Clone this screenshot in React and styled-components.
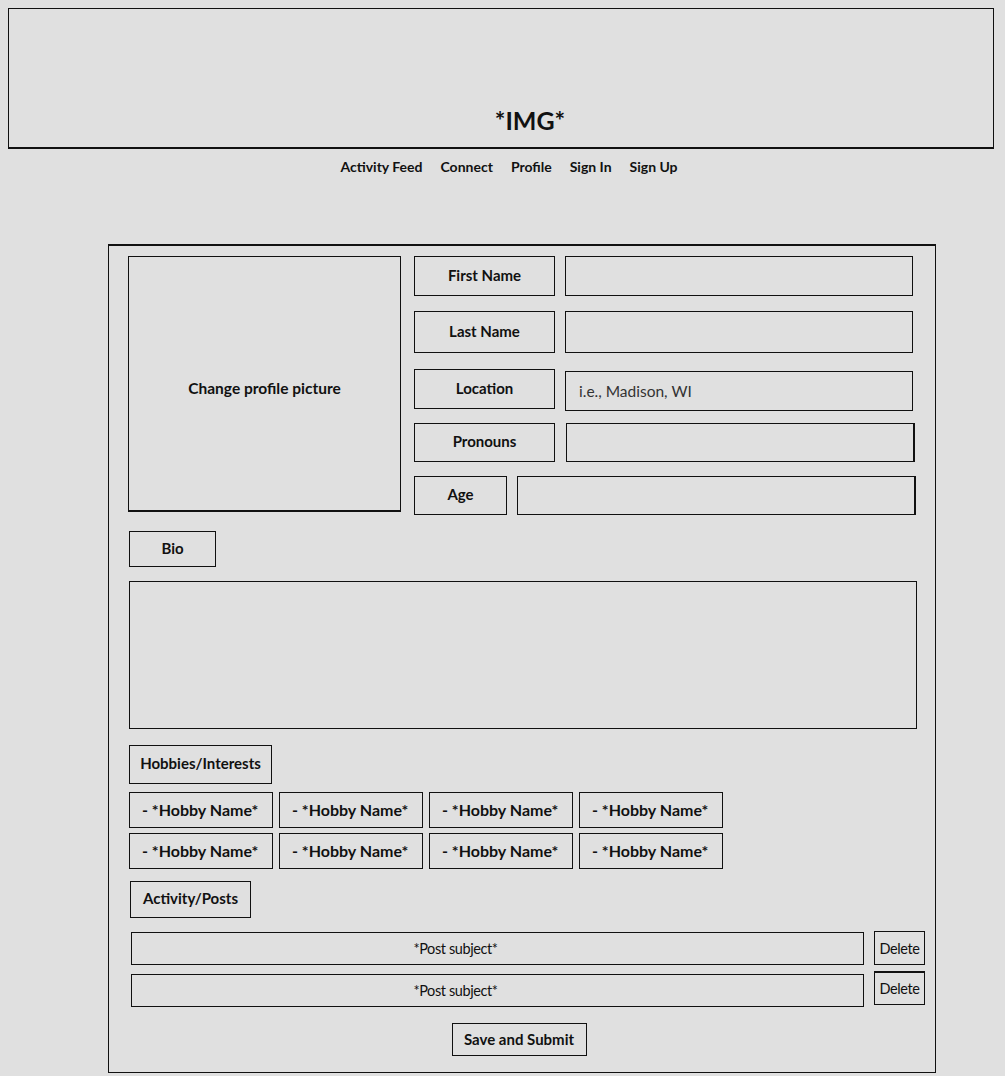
import React from 'react';
import styled, { createGlobalStyle } from 'styled-components';

const GlobalStyle = createGlobalStyle`
  html, body {
    background: #e0e0e0;
  }
  body {
    margin: 8px;
    font-family: Lato, "Open Sans", "Liberation Sans", sans-serif;
    color: #111;
  }
`;

const Banner = styled.header`
  width: 986px;
  height: 141px;
  border: 1px solid #111;
  border-bottom-width: 2px;
  display: flex;
  align-items: flex-end;
  justify-content: center;
  padding-left: 58px;
  padding-bottom: 12px;
  box-sizing: border-box;
  font-size: 25px;
  font-weight: 700;
`;

const Nav = styled.nav`
  display: flex;
  justify-content: center;
  gap: 18px;
  width: 986px;
  padding: 9px 0 0 16px;
  height: 95px;
  box-sizing: border-box;
  font-size: 14px;
  font-weight: 700;
`;

const NavLink = styled.span`
  cursor: pointer;
`;

const Card = styled.main`
  width: 828px;
  margin-left: 100px;
  border: 1px solid #111;
  border-top-width: 2px;
  box-sizing: border-box;
  padding: 10px 8px 16px 19px;
  display: flex;
  flex-direction: column;
`;

const Top = styled.section`
  display: flex;
  gap: 13px;
`;

const Picture = styled.div`
  width: 273px;
  height: 256px;
  border: 1px solid #111;
  border-bottom-width: 2px;
  box-sizing: border-box;
  display: flex;
  align-items: center;
  justify-content: center;
  padding-top: 9px;
  font-size: 15.5px;
  font-weight: 700;
`;

const Fields = styled.div`
  display: flex;
  flex-direction: column;
`;

const FieldRow = styled.div`
  display: flex;
  gap: ${p => p.$gap || 10}px;
  margin-top: ${p => p.$top || 0}px;
  height: ${p => p.$h || 40}px;
`;

const Box = styled.div`
  border: 1px solid #111;
  box-sizing: border-box;
  display: flex;
  align-items: center;
  justify-content: center;
  font-size: 15px;
  font-weight: 700;
`;

const Label = styled(Box)`
  width: ${p => p.$w || 141}px;
  height: ${p => p.$h ? p.$h + 'px' : '100%'};
  padding-bottom: 3px;
`;

const Input = styled.div`
  width: ${p => p.$w}px;
  height: 100%;
  border: 1px solid #111;
  border-right-width: ${p => p.$thick ? 2 : 1}px;
  box-sizing: border-box;
  display: flex;
  align-items: center;
  padding-left: 13px;
  font-size: 15.5px;
  color: #333;
`;

const Section = styled.div`
  margin-top: ${p => p.$top}px;
  margin-left: ${p => p.$left || 0}px;
`;

const Bio = styled.div`
  width: 788px;
  height: 148px;
  border: 1px solid #111;
  box-sizing: border-box;
`;

const HobbyGrid = styled.div`
  display: grid;
  grid-template-columns: repeat(4, 144px);
  grid-auto-rows: 36px;
  column-gap: 6px;
  row-gap: 5px;
`;

const Hobby = styled(Box)`
  justify-content: flex-start;
  padding: 0 0 2px 12px;
  font-size: 16px;
`;

const PostRow = styled.div`
  display: flex;
  gap: 10px;
  align-items: flex-start;
  margin-top: ${p => p.$top || 0}px;
  margin-left: 3px;
`;

const Post = styled(Box)`
  width: 733px;
  height: 33px;
  padding-right: 84px;
  font-weight: 400;
  font-size: 14.5px;
  letter-spacing: -0.4px;
`;

const DeleteButton = styled(Box)`
  width: 51px;
  height: 34px;
  font-weight: 400;
  font-size: 14.5px;
  letter-spacing: -0.4px;
  border-top-width: ${p => p.$thick ? 2 : 1}px;
  margin-top: ${p => p.$shift || 0}px;
`;

const SubmitButton = styled(Box)`
  align-self: center;
  width: 135px;
  height: 33px;
  margin: 16px 0 0 -17px;
  padding-bottom: 2px;
`;

const hobbies = Array.from({ length: 8 }, () => '- *Hobby Name*');

export default function App() {
  return (
    <>
      <GlobalStyle />
      <Banner>*IMG*</Banner>
      <Nav>
        <NavLink>Activity Feed</NavLink>
        <NavLink>Connect</NavLink>
        <NavLink>Profile</NavLink>
        <NavLink>Sign In</NavLink>
        <NavLink>Sign Up</NavLink>
      </Nav>
      <Card>
        <Top>
          <Picture>Change profile picture</Picture>
          <Fields>
            <FieldRow $h={40}>
              <Label>First Name</Label>
              <Input $w={348} />
            </FieldRow>
            <FieldRow $top={15} $h={42}>
              <Label>Last Name</Label>
              <Input $w={348} />
            </FieldRow>
            <FieldRow $top={16} $h={40}>
              <Label>Location</Label>
              <Input $w={348} style={{ marginTop: 2 }}>i.e., Madison, WI</Input>
            </FieldRow>
            <FieldRow $top={14} $h={39} $gap={11}>
              <Label>Pronouns</Label>
              <Input $w={349} $thick />
            </FieldRow>
            <FieldRow $top={14} $h={39}>
              <Label $w={93}>Age</Label>
              <Input $w={399} $thick />
            </FieldRow>
          </Fields>
        </Top>
        <Section $top={16} $left={1}>
          <Label $w={87} $h={36}>Bio</Label>
        </Section>
        <Section $top={14} $left={1}>
          <Bio />
        </Section>
        <Section $top={16} $left={1}>
          <Label $w={143} $h={39}>Hobbies/Interests</Label>
        </Section>
        <Section $top={8} $left={1}>
          <HobbyGrid>
            {hobbies.map((h, i) => (
              <Hobby key={i}>{h}</Hobby>
            ))}
          </HobbyGrid>
        </Section>
        <Section $top={12} $left={2}>
          <Label $w={121} $h={37}>Activity/Posts</Label>
        </Section>
        <PostRow $top={14}>
          <Post>*Post subject*</Post>
          <DeleteButton $shift={-1}>Delete</DeleteButton>
        </PostRow>
        <PostRow $top={9}>
          <Post>*Post subject*</Post>
          <DeleteButton $shift={-3} $thick>Delete</DeleteButton>
        </PostRow>
        <SubmitButton>Save and Submit</SubmitButton>
      </Card>
    </>
  );
}
